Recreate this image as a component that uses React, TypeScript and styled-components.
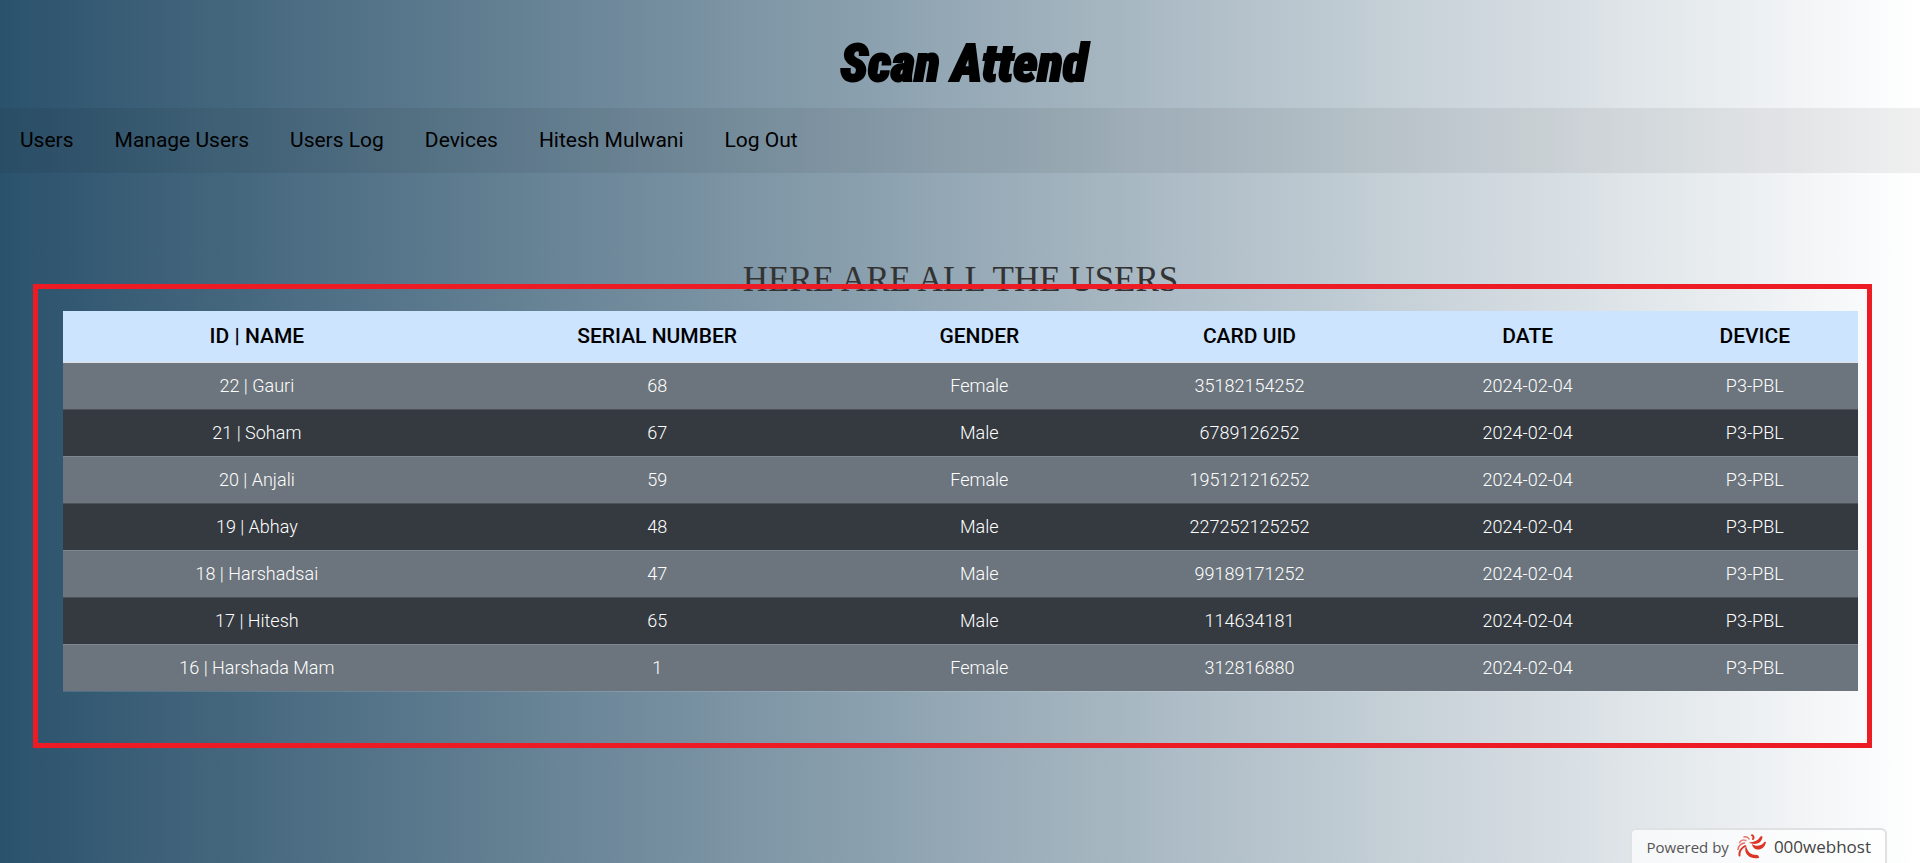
import React from 'react';
import styled, { createGlobalStyle } from 'styled-components';

const GlobalStyle = createGlobalStyle`
  *, *::before, *::after { box-sizing: border-box; }
  body {
    margin: 0;
    font-family: Roboto, "Liberation Sans", sans-serif;
    color: #000;
  }
`;

const Page = styled.div`
  min-height: 100vh;
  display: flex;
  flex-direction: column;
  background: linear-gradient(to right, #2b526c, #ffffff);
`;

const Header = styled.header`
  height: 108px;
  display: flex;
  align-items: center;
  justify-content: center;
  padding: 20px 0 0 8px;
`;

const Logo = styled.h1`
  margin: 0;
  font-family: Impact, "Roboto Condensed", "Liberation Sans", sans-serif;
  font-size: 52px;
  line-height: 64px;
  font-weight: 900;
  font-style: italic;
  -webkit-text-stroke: 2px #000;
`;

const Nav = styled.nav`
  height: 65px;
  display: flex;
  align-items: center;
  gap: 41px;
  padding: 0 20px 2px;
  background: rgba(0, 0, 0, 0.06);
`;

const NavLink = styled.a`
  font-size: 21px;
  line-height: 24px;
  color: #000;
  text-decoration: none;
`;

const Main = styled.main`
  flex: 1;
  padding: 86px 62px 0 63px;
`;

const Title = styled.h2`
  margin: 0 0 10px;
  text-align: center;
  font-family: "Liberation Serif", serif;
  font-size: 35px;
  line-height: 42px;
  font-weight: 400;
  color: #333;
`;

const Highlighted = styled.div`
  position: relative;
`;

const Outline = styled.div`
  position: absolute;
  inset: -27px -14px -56px -30px;
  border: 5px solid #ed1c24;
  pointer-events: none;
`;

const Table = styled.table`
  width: 100%;
  table-layout: fixed;
  border-collapse: collapse;
  text-align: center;
`;

const Column = styled.col<{ $share: string }>`
  width: ${(p) => p.$share};
`;

const HeadCell = styled.th`
  height: 51px;
  padding: 0;
  background: #cde4ff;
  border-bottom: 1px solid #dee2e6;
  font-size: 21px;
  line-height: 24px;
  font-weight: 500;
`;

const Row = styled.tr`
  background: #343a40;
  &:nth-child(odd) { background: #6c757d; }
`;

const Cell = styled.td`
  height: 47px;
  padding: 0;
  border-bottom: 1px solid rgba(255, 255, 255, 0.13);
  font-size: 18px;
  line-height: 24px;
  font-weight: 300;
  color: #fff;
`;

const Footer = styled.footer`
  display: flex;
  justify-content: flex-end;
  padding-right: 33px;
`;

const HostBadge = styled.a`
  height: 35px;
  display: flex;
  align-items: center;
  gap: 8px;
  padding: 0 14px;
  border: 2px solid #dfe2e3;
  border-bottom: 0;
  border-radius: 6px 6px 0 0;
  background: rgba(255, 255, 255, 0.7);
  font-family: "Open Sans", sans-serif;
  font-size: 15px;
  line-height: 20px;
  color: #555;
  text-decoration: none;
`;

const HostName = styled.span`
  font-size: 17px;
  font-weight: 500;
  color: #444;
`;

const links = ['Users', 'Manage Users', 'Users Log', 'Devices', 'Hitesh Mulwani', 'Log Out'];

const columns = [
  { label: 'ID | NAME', share: '21.6%' },
  { label: 'SERIAL NUMBER', share: '23%' },
  { label: 'GENDER', share: '12.9%' },
  { label: 'CARD UID', share: '17.2%' },
  { label: 'DATE', share: '13.8%' },
  { label: 'DEVICE', share: '11.5%' },
];

const users = [
  ['22 | Gauri', '68', 'Female', '35182154252'],
  ['21 | Soham', '67', 'Male', '6789126252'],
  ['20 | Anjali', '59', 'Female', '195121216252'],
  ['19 | Abhay', '48', 'Male', '227252125252'],
  ['18 | Harshadsai', '47', 'Male', '99189171252'],
  ['17 | Hitesh', '65', 'Male', '114634181'],
  ['16 | Harshada Mam', '1', 'Female', '312816880'],
];

function HostLogo() {
  return (
    <svg width="29" height="25" viewBox="0 0 29 25" fill="#dc3426" aria-hidden="true">
      <path d="M9 11C6 19 12 26 22 24C22 22 21 21 20 21C14 21 10 18 9 11Z" />
      <path d="M15 10C16 17.500 27 18 29 8C28 7.500 27 8 26.500 9C24 12 19 13 15 10Z" />
      <path d="M12 8.500C17 11.500 25 10 25.500 2.500C24.500 2 23.500 2 23 3C21 7 17 8 12 8.500Z" />
      <g fill="none" stroke="#dc3426" strokeLinecap="round">
        <path d="M8 12C4.500 14 2 17 2.500 21.500" strokeWidth="2" />
        <path d="M7.500 9C4 9.500 1.500 12 1 15.500" strokeWidth="1.500" opacity="0.7" />
        <path d="M9 6.500C6.500 5.500 4 6 2.500 8.500" strokeWidth="1.500" opacity="0.6" />
        <path d="M12 5C11 3 9 2.500 7 3" strokeWidth="1.500" opacity="0.7" />
        <path d="M16 5C17 3.500 16.500 2 15 1.200" strokeWidth="2" />
      </g>
    </svg>
  );
}

export default function App() {
  return (
    <>
      <GlobalStyle />
      <Page>
        <Header>
          <Logo>Scan Attend</Logo>
        </Header>
        <Nav>
          {links.map((label) => (
            <NavLink key={label} href="#">{label}</NavLink>
          ))}
        </Nav>
        <Main>
          <Title>HERE ARE ALL THE USERS</Title>
          <Highlighted>
            <Table>
              <colgroup>
                {columns.map((c) => <Column key={c.label} $share={c.share} />)}
              </colgroup>
              <thead>
                <tr>
                  {columns.map((c) => <HeadCell key={c.label} scope="col">{c.label}</HeadCell>)}
                </tr>
              </thead>
              <tbody>
                {users.map((user) => (
                  <Row key={user[0]}>
                    {[...user, '2024-02-04', 'P3-PBL'].map((value, i) => <Cell key={i}>{value}</Cell>)}
                  </Row>
                ))}
              </tbody>
            </Table>
            <Outline />
          </Highlighted>
        </Main>
        <Footer>
          <HostBadge href="#">
            <span>Powered by</span>
            <HostLogo />
            <HostName>000webhost</HostName>
          </HostBadge>
        </Footer>
      </Page>
    </>
  );
}
